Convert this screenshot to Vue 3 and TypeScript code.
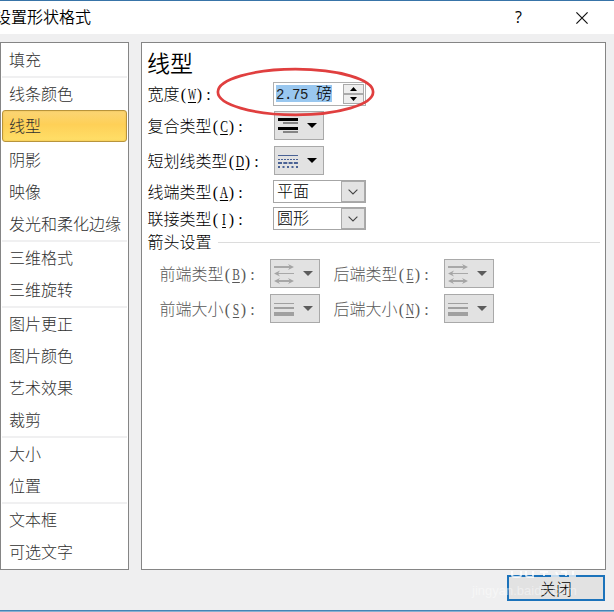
<script setup lang="ts">
interface Item { text: string; active?: boolean }

const groups: Item[][] = [
  [{ text: '填充' }],
  [{ text: '线条颜色' }, { text: '线型', active: true }],
  [{ text: '阴影' }, { text: '映像' }, { text: '发光和柔化边缘' }],
  [{ text: '三维格式' }, { text: '三维旋转' }],
  [{ text: '图片更正' }, { text: '图片颜色' }, { text: '艺术效果' }, { text: '裁剪' }],
  [{ text: '大小' }, { text: '位置' }],
  [{ text: '文本框' }, { text: '可选文字' }],
]

const selects = [
  { label: '线端类型', key: 'A', value: '平面' },
  { label: '联接类型', key: 'I', value: '圆形' },
]

const arrows = [
  { icon: 'type', cells: [{ label: '前端类型', key: 'B' }, { label: '后端类型', key: 'E' }] },
  { icon: 'size', cells: [{ label: '前端大小', key: 'S' }, { label: '后端大小', key: 'N' }] },
]
</script>

<template>
  <div class="dialog">
    <header class="titlebar">
      <span class="caption">设置形状格式</span>
      <span class="help">?</span>
      <svg class="x" width="12" height="12" viewBox="0 0 12 12"><path d="M.4.4l11.2 11.2M11.6.4L.4 11.6" stroke="#111" stroke-width="1.2" fill="none" /></svg>
    </header>

    <div class="body">
      <nav class="side">
        <div v-for="(g, i) in groups" :key="i" class="group">
          <div v-for="it in g" :key="it.text" class="item" :class="{ active: it.active }">{{ it.text }}</div>
        </div>
      </nav>

      <main class="panel">
        <h1>线型</h1>
        <div class="row width-row">
          <span class="label">宽度<i>(</i><i class="k wide">W</i><i>)</i><i class="c">:</i></span>
          <div class="spin">
            <span class="sel"><i>2</i><i>.</i><i>7</i><i>5</i><i></i>磅</span>
            <div class="btns">
              <b><svg width="7" height="4" viewBox="0 0 7 4"><path d="M0 4L3.5 0L7 4z" /></svg></b>
              <b><svg width="7" height="4" viewBox="0 0 7 4"><path d="M0 0L3.5 4L7 0z" /></svg></b>
            </div>
          </div>
        </div>
        <div class="row compound-row">
          <span class="label">复合类型<i>(</i><i class="k">C</i><i>)</i><i class="c">:</i></span>
          <div class="drop">
            <svg width="48" height="27" viewBox="0 0 48 27">
              <path d="M3 6h20v3H3zM3 15h20v3H3z" fill="#000" />
              <path d="M8 10h15v2H8zM8 19h15v2H8z" fill="#858585" />
              <path d="M32 11h10l-5 5z" fill="#000" />
            </svg>
          </div>
        </div>
        <div class="row dash-row">
          <span class="label">短划线类型<i>(</i><i class="k">D</i><i>)</i><i class="c">:</i></span>
          <div class="drop">
            <svg width="48" height="27" viewBox="0 0 48 27" stroke="#4a6295" fill="none">
              <path d="M3 8.5h20" />
              <path d="M3 12.5h20" stroke-dasharray="2 1" />
              <path d="M3 16h20" stroke-width="2" stroke-dasharray="4 1.3" />
              <path d="M3 20h20" stroke-width="2" stroke-dasharray="2 2.5" />
              <path d="M32 11h10l-5 5z" fill="#000" stroke="none" />
            </svg>
          </div>
        </div>
        <div v-for="s in selects" :key="s.key" class="row select-row">
          <span class="label">{{ s.label }}<i>(</i><i class="k">{{ s.key }}</i><i>)</i><i class="c">:</i></span>
          <div class="combo">
            <span>{{ s.value }}</span>
            <b><svg width="10" height="6" viewBox="0 0 10 6"><path d="M.6.6L5 5L9.4.6" fill="none" stroke="#444" stroke-width="1.1" /></svg></b>
          </div>
        </div>
        <div class="legend"><span>箭头设置</span><hr></div>
        <div v-for="r in arrows" :key="r.icon" class="arrow-row">
          <div v-for="c in r.cells" :key="c.key" class="cell">
            <span class="label">{{ c.label }}<i>(</i><i class="k">{{ c.key }}</i><i>)</i><i class="c">:</i></span>
            <div class="drop">
              <svg v-if="r.icon === 'type'" width="48" height="27" viewBox="0 0 48 27">
                <path d="M3 6h17v2H3zM5 13h18v1H5zM6 20h15v2H6z" fill="#a8a8a8" />
                <path d="M17 4L23 7l-6 3l2-3zM9 10.5L3 13.5l6 3l-2-3zM9 18L3 21l6 3L7 21zM17 18l6 3l-6 3l2-3z" fill="#a4a4a4" />
                <path d="M32 11h10l-5 5z" fill="#5c5c5c" />
              </svg>
              <svg v-else width="48" height="27" viewBox="0 0 48 27">
                <path d="M3 8h20v1H3zM3 12h20v2H3zM3 17h20v4H3z" fill="#a0a0a0" />
                <path d="M32 11h10l-5 5z" fill="#5c5c5c" />
              </svg>
            </div>
          </div>
        </div>
      </main>
    </div>

    <footer><button>关闭</button></footer>
    <svg class="mark" width="160" height="50" viewBox="0 0 160 50"><ellipse cx="80.5" cy="25" rx="77.6" ry="22.8" fill="none" stroke="#e03f3f" stroke-width="2.7" /></svg>
    <svg class="logo" width="68" height="7" viewBox="0 0 68 7" fill="none" stroke="#fff" stroke-opacity=".75" stroke-width="2">
      <path d="M3 0v4q0 2 3 2h3q3 0 3-2V0M17 0v4q0 2 3 2h4V0M31 1h8M35 0v5M42 5h7l-2-4M52 1h5v4M60 5h7M64 0v5" />
    </svg>
    <div class="watermark">jingyan.baidu.com</div>
  </div>
</template>

<style>
body { margin: 0; overflow: hidden; }
</style>

<style scoped>
* { box-sizing: border-box; }
.dialog {
  position: relative; width: 614px; height: 612px; overflow: hidden;
  background: #efeff0; border-top: 1px solid #3874a8;
  font: 300 16px/20px "Noto Sans CJK SC", sans-serif; color: #000;
  display: flex; flex-direction: column;
}
.dialog::after { content: ""; height: 2px; margin-top: auto; flex: none; background: linear-gradient(#4484b5 50%, #87afd0 50%); }
.titlebar { height: 33px; flex: none; background: #fff; display: flex; align-items: center; }
.caption { margin: -3px 0 0 -5px; width: 520px; font-weight: 350; }
.help { width: 61px; margin-top: -2px; font: 16px/20px "Open Sans", sans-serif; }
.x { flex: none; }
.body { display: flex; gap: 12px; height: 528px; margin-top: 8px; flex: none; }
.side { width: 129px; border: 1px solid #858585; background: #fff; padding: 1px 1px 0; }
.group + .group { border-top: 2px solid #f0f0f1; }
.group:nth-child(3) { border-top-color: #fff; }
.item { height: 32px; padding-left: 7px; line-height: 31px; color: #303030; white-space: nowrap; }
.item.active {
  border: 1px solid #b8943b; border-radius: 3px; padding-left: 6px; line-height: 29px;
  background: linear-gradient(#fbd575, #fed057 45%, #ffdf68);
  box-shadow: inset 0 0 2px #e9b84a;
}
.panel { width: 465px; border: 1px solid #858585; background: #fff; }
h1 { margin: 0; height: 39px; padding-left: 5px; font-size: 23px; line-height: 39px; font-weight: 350; }
.row { display: grid; grid-template-columns: 126px auto; justify-content: start; padding-left: 6px; align-items: center; }
i { display: inline-block; width: 8px; text-align: center; font: 400 16px/16px "Liberation Serif", serif; }
.k { width: 12px; margin: 0 -2px; transform: scaleX(.72); text-decoration: underline; text-underline-offset: 2px; }
.wide { width: 16px; margin: 0 -4px; transform: scaleX(.54); }
.c { padding-left: 2px; }
.label { white-space: nowrap; margin: -2px 0 0 -.5px; }
.width-row { height: 24px; margin-bottom: 5px; }
.compound-row { margin-bottom: 6px; }
.dash-row { margin-bottom: 5px; }
.select-row { height: 23px; margin-bottom: 4px; }
.spin { width: 93px; height: 24px; margin-left: -1px; border: 1px solid #b0b0b0; display: flex; align-items: center; justify-content: space-between; padding: 0 1px 0 2px; }
.sel { background: #99c7ef; height: 17px; line-height: 15px; width: 56px; margin-top: -2px; white-space: nowrap; }
.sel i { font: 400 14px/15px "Liberation Mono", monospace; color: #1a1a1a; }
.btns { display: flex; flex-direction: column; width: 21px; height: 20px; }
.btns b { flex: 1; border: 1px solid #aaa; background: #eee; display: flex; align-items: center; justify-content: center; }
.drop { width: 50px; height: 29px; border: 1px solid #a9a9a9; background: #e2e2e2; }
.drop svg { display: block; }
.combo { width: 93px; height: 23px; margin-left: -1px; border: 1px solid #a6a6a6; display: flex; justify-content: space-between; }
.combo span { padding-left: 3px; line-height: 19px; }
.combo b { width: 24px; border: 1px solid #aaa; background: #e3e3e3; display: flex; align-items: center; justify-content: center; }
.legend { height: 24px; margin: -4px 5px 5px 5.5px; display: flex; align-items: center; gap: 6px; }
.legend span { margin-top: -2px; }
.legend hr { flex: 1; border: 0; height: 1px; background: #dcdcdc; margin: 0; }
.arrow-row { display: flex; gap: 14px; padding-left: 18px; margin-bottom: 6px; color: #585858; }
.cell { display: grid; grid-template-columns: 110px 50px; align-items: center; }
footer { display: flex; justify-content: flex-end; padding: 5px 9px 0 0; flex: none; }
button { width: 98px; height: 26px; padding: 0; border: 2px solid #1c73bb; background: #e2e2e2; font: inherit; line-height: 18px; color: #000; }
.mark { position: absolute; left: 215px; top: 66px; }
.logo { position: absolute; left: 509px; top: 570px; }
.watermark { position: absolute; left: 472px; top: 581px; font: 13px/18px "Liberation Sans", sans-serif; color: rgba(255, 255, 255, .45); }
</style>
